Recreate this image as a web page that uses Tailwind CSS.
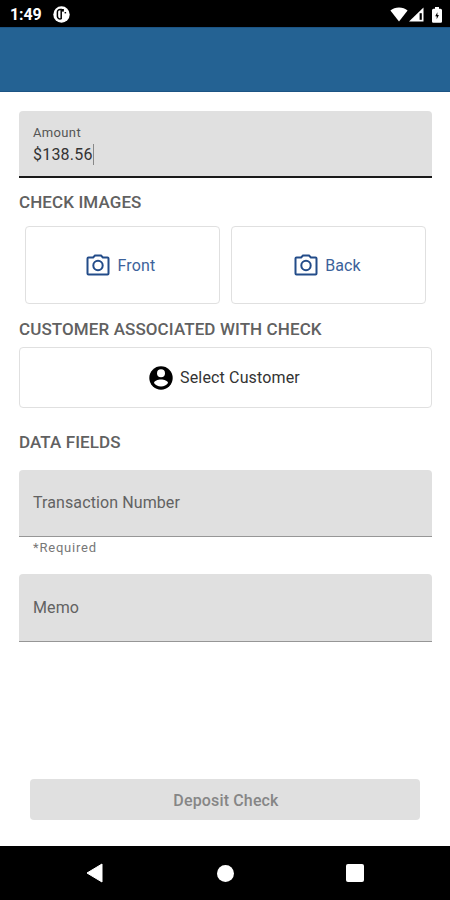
<!DOCTYPE html>
<html lang="en">
<head>
  <meta charset="UTF-8">
  <meta name="viewport" content="width=device-width, initial-scale=1.0">
  <title>Deposit Check</title>
  <script src="https://cdn.jsdelivr.net/npm/@tailwindcss/browser@4"></script>
</head>
<body class="bg-white">
  <div class="flex flex-col w-[450px] h-[900px] overflow-hidden font-[Roboto,sans-serif] whitespace-nowrap">

    <!-- Status bar -->
    <div class="flex items-center justify-between h-[27px] shrink-0 bg-black text-white pl-[10px] pr-[8px] pt-[2px]">
      <div class="flex items-center gap-[11px]">
        <span class="text-[16px] leading-[20px] pt-px font-bold tracking-[-0.1px]">1:49</span>
        <svg class="w-[17px] h-[17px]" viewBox="0 0 17 17">
          <circle cx="8.5" cy="8.5" r="8.2" fill="#fff"/>
          <path d="M8.200 3.400H7A2.600 2.600 0 0 0 4.400 6v4.400a2.600 2.600 0 0 0 3.800 2.200z" fill="none" stroke="#000" stroke-width="1.500"/>
          <path d="M8.500 3h2.400v2.600H8.500z" fill="#000"/>
          <path d="M11.600 6h1.500v1.400h-1.500z" fill="#000"/>
        </svg>
      </div>
      <div class="flex items-center">
        <svg class="w-[18px] h-[15px]" viewBox="0 0 18 15">
          <path d="M9 14.5L.4 3.6C2.7 1.6 5.7.5 9 .5s6.300 1.100 8.600 3.100z" fill="#fff"/>
        </svg>
        <svg class="w-[15px] h-[15px] ml-[1px]" viewBox="0 0 15 15">
          <path d="M0 14.500L14.500.5v14z" fill="#fff"/>
          <path d="M10.600 6.200h2.200v6.600h-2.200z" fill="#000"/>
        </svg>
        <svg class="w-[10px] h-[16px] ml-[8px]" viewBox="0 0 10 16">
          <path d="M3 0h4v1.800h1.500q1.500 0 1.500 1.500V14.500q0 1.200-1.200 1.200H1.200Q0 15.700 0 14.500V3.300Q0 1.800 1.500 1.800H3z" fill="#fff"/>
          <path d="M5.400 5.200L3.200 9.300h1.500v2.900l2.200-4.200H5.400z" fill="#000"/>
        </svg>
      </div>
    </div>

    <!-- App bar -->
    <div class="h-[65px] shrink-0 bg-[#246293] border-y border-[#1c5484]"></div>

    <main class="flex flex-col flex-1 pl-[19px] pr-[18px] pt-[19px]">
      <!-- Amount -->
      <div class="h-[67px] shrink-0 bg-[#e0e0e0] rounded-t border-b-2 border-[#1a1a1a] pl-[14px] pt-[14px]">
        <div class="text-[13px] leading-[16px] tracking-[0.35px] text-[#555]">Amount</div>
        <div class="flex items-center h-[21px] mt-[3px]">
          <span class="text-[16px] leading-[22px] tracking-[0.2px] text-[#333]">$138.56</span>
          <span class="w-px h-[21px] bg-[#888]"></span>
        </div>
      </div>

      <h2 class="mt-[15px] h-[20px] text-[17px] leading-[18px] tracking-[0.1px] font-medium text-[#616161]">CHECK IMAGES</h2>

      <!-- Check images -->
      <div class="flex gap-[11px] mt-[13px] px-[6px]">
        <button class="flex items-center justify-center w-[195px] h-[78px] border border-[#e0e0e0] rounded text-[#3c629b] pr-[3px]">
          <svg class="w-[24px] h-[22px]" viewBox="0 0 24 22" fill="none" stroke="#234c89" stroke-width="2">
            <path d="M2.500 3.500h4.600L9 1.500h6l1.900 2h4.600q1 0 1 1v15q0 1-1 1h-19q-1 0-1-1v-15q0-1 1-1z"/>
            <circle cx="12" cy="11.500" r="4.700"/>
          </svg>
          <span class="ml-[7px] pt-[2px] text-[16px] leading-[20px] tracking-[0.2px]">Front</span>
        </button>
        <button class="flex items-center justify-center w-[195px] h-[78px] border border-[#e0e0e0] rounded text-[#3c629b] pr-[2px]">
          <svg class="w-[24px] h-[22px]" viewBox="0 0 24 22" fill="none" stroke="#234c89" stroke-width="2">
            <path d="M2.500 3.500h4.600L9 1.500h6l1.900 2h4.600q1 0 1 1v15q0 1-1 1h-19q-1 0-1-1v-15q0-1 1-1z"/>
            <circle cx="12" cy="11.500" r="4.700"/>
          </svg>
          <span class="ml-[7px] pt-[2px] text-[16px] leading-[20px] tracking-[0.1px]">Back</span>
        </button>
      </div>

      <h2 class="mt-[16px] h-[20px] text-[17px] leading-[18px] tracking-[0.1px] font-medium text-[#616161]">CUSTOMER ASSOCIATED WITH CHECK</h2>

      <button class="flex items-center justify-center h-[61px] shrink-0 mt-[7px] pr-[2px] border border-[#e0e0e0] rounded text-[#333]">
        <svg class="w-[24px] h-[24px]" viewBox="0 0 24 24">
          <circle cx="12" cy="12" r="11.700" fill="#000"/>
          <circle cx="12" cy="7.300" r="4" fill="#fff"/>
          <path d="M12 13.600c-3 0-7 1.500-7 3.500 1.500 2.200 4 3.400 7 3.400s5.500-1.200 7-3.400c0-2-4-3.500-7-3.500z" fill="#fff"/>
        </svg>
        <span class="ml-[7px] pt-px text-[16px] leading-[20px] tracking-[0.15px]">Select Customer</span>
      </button>

      <h2 class="mt-[25px] h-[20px] text-[17px] leading-[18px] tracking-[0.1px] font-medium text-[#616161]">DATA FIELDS</h2>

      <!-- Data fields -->
      <div class="flex items-center h-[67px] shrink-0 mt-[17px] bg-[#e0e0e0] rounded-t border-b border-[#969696] pl-[14px] text-[16px] tracking-[0.1px] text-[#626262]">Transaction Number</div>
      <div class="h-[16px] mt-[3px] pl-[14px] text-[13px] leading-[16px] tracking-[0.8px] text-[#777]">*Required</div>
      <div class="flex items-center h-[68px] shrink-0 mt-[18px] bg-[#e0e0e0] rounded-t border-b border-[#969696] pl-[14px] text-[16px] tracking-[0.1px] text-[#626262]">Memo</div>

      <button class="h-[41px] shrink-0 mt-auto mb-[26px] ml-[11px] mr-[12px] pt-[2px] pl-[2px] bg-[#e0e0e0] rounded text-[16px] leading-[20px] tracking-[0.15px] font-medium text-[#868686]">Deposit Check</button>
    </main>

    <!-- Navigation bar -->
    <div class="flex items-center h-[54px] shrink-0 bg-black pl-[86px]">
      <svg class="w-[17px] h-[20px]" viewBox="0 0 17 20">
        <path d="M1 10L16 1v18z" fill="#fff" stroke="#fff" stroke-linejoin="round"/>
      </svg>
      <div class="w-[17px] h-[17px] ml-[114px] rounded-full bg-white"></div>
      <div class="w-[18px] h-[18px] ml-[112px] rounded-[2px] bg-white"></div>
    </div>
  </div>
</body>
</html>
